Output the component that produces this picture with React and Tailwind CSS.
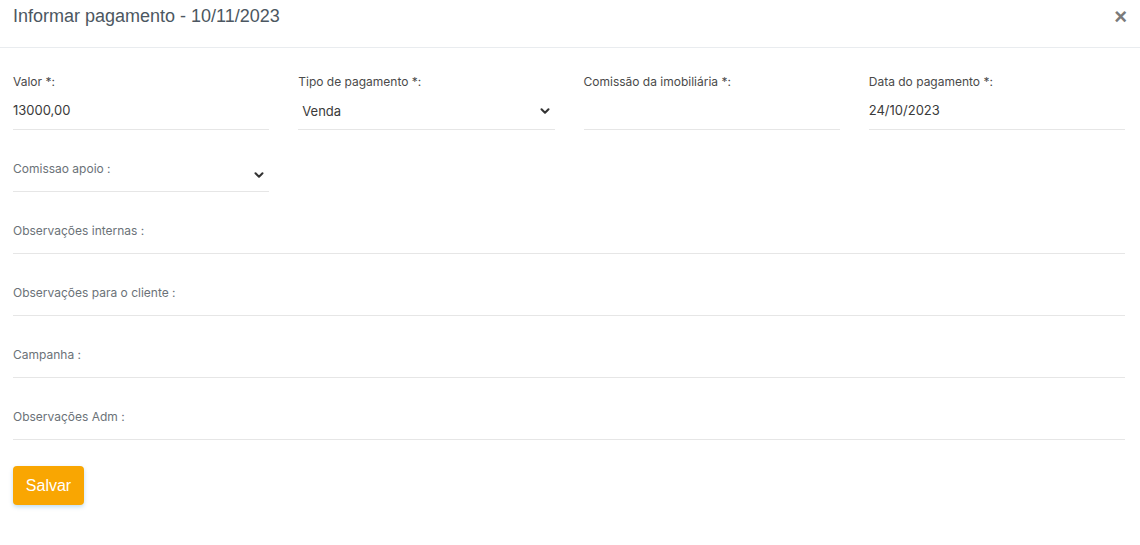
import { ChevronDown } from 'lucide-react';

function TopField({ label, value, select }) {
    return (
        <div className="flex flex-col">
            <label className="h-4 text-[12px] leading-4 text-[#4a4a4a]">{label}</label>
            <div className="mt-[3px] flex h-[37px] items-center justify-between border-b border-[#e6e6e6]">
                <span className={`text-[13px] text-[#3a3a3a] ${select ? 'pl-1 pt-[2px]' : ''}`}>{value}</span>
                {select && <ChevronDown size={14} strokeWidth={3.5} className="mr-[3px] text-[#333]" />}
            </div>
        </div>
    );
}

function LineField({ label, select }) {
    return (
        <div className="flex h-[62px] items-end justify-between border-b border-[#e6e6e6] pb-[14px]">
            <span className="text-[12px] leading-4 text-[#6b7278]">{label}</span>
            {select && <ChevronDown size={14} strokeWidth={3.5} className="-mb-[5px] mr-[3px] text-[#333]" />}
        </div>
    );
}

export default function App() {
    return (
        <div className="min-h-[545px] bg-white" style={{ fontFamily: 'Inter, "Noto Sans", sans-serif' }}>
            <div className="flex h-[48px] items-center justify-between border-b border-[#e9ecef] pl-[13px] pr-[13px]">
                <h1 className="-mt-[14px] text-[18px] text-[#4c5761]" style={{ fontFamily: '"Liberation Sans", Arial, sans-serif' }}>
                    Informar pagamento - 10/11/2023
                </h1>
                <span className="-mt-[14px] text-[22px] font-bold leading-none text-[#7a7a7a]" style={{ fontFamily: '"Liberation Sans", Arial, sans-serif' }}>×</span>
            </div>
            <div className="px-[13px] pt-[26px]">
                <div className="grid grid-cols-4 gap-x-[29px] pr-[2px]">
                    <TopField label="Valor *:" value="13000,00" />
                    <TopField label="Tipo de pagamento *:" value="Venda" select />
                    <TopField label="Comissão da imobiliária *:" value="" />
                    <TopField label="Data do pagamento *:" value="24/10/2023" />
                </div>
                <div className="grid grid-cols-4 gap-x-[29px] pr-[2px]">
                    <LineField label="Comissao apoio :" select />
                </div>
                <div className="pr-[2px]">
                    <LineField label="Observações internas :" />
                    <LineField label="Observações para o cliente :" />
                    <LineField label="Campanha :" />
                    <LineField label="Observações Adm :" />
                </div>
                <button
                    className="mt-[26px] h-[39px] w-[71px] rounded-[4px] bg-[#f9a602] text-[16px] text-white shadow-[0_2px_4px_rgba(0,120,200,0.25)]"
                    style={{ fontFamily: '"Liberation Sans", Arial, sans-serif' }}
                >
                    Salvar
                </button>
            </div>
        </div>
    );
}
